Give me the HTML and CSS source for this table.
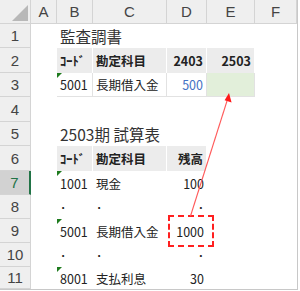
FILE: index.html
```html
<!DOCTYPE html>
<html lang="ja">
<head>
<meta charset="utf-8">
<link rel="stylesheet" href="styles.css">
</head>
<body>
<div class="sheet">
  <div class="corner"><span class="corner-tri"></span></div>
  <div class="ch">A</div><div class="ch">B</div><div class="ch">C</div><div class="ch">D</div><div class="ch">E</div><div class="ch">F</div>

  <div class="rh">1</div><div class="c"></div><div class="c title">監査調書</div><div class="c"></div><div class="c"></div><div class="c"></div><div class="c"></div>

  <div class="rh">2</div><div class="c"></div><div class="c th">ｺｰﾄﾞ</div><div class="c th">勘定科目</div><div class="c th num">2403</div><div class="c th num">2503</div><div class="c"></div>

  <div class="rh">3</div><div class="c"></div><div class="c td tri">5001</div><div class="c td">長期借入金</div><div class="c td num blue">500</div><div class="c td green"></div><div class="c"></div>

  <div class="rh">4</div><div class="c"></div><div class="c"></div><div class="c"></div><div class="c"></div><div class="c"></div><div class="c"></div>

  <div class="rh">5</div><div class="c"></div><div class="c title">2503期 試算表</div><div class="c"></div><div class="c"></div><div class="c"></div><div class="c"></div>

  <div class="rh">6</div><div class="c"></div><div class="c th">ｺｰﾄﾞ</div><div class="c th">勘定科目</div><div class="c th num">残高</div><div class="c"></div><div class="c"></div>

  <div class="rh sel">7</div><div class="c"></div><div class="c tri">1001</div><div class="c">現金</div><div class="c num">100</div><div class="c"></div><div class="c"></div>

  <div class="rh">8</div><div class="c"></div><div class="c">･</div><div class="c">･</div><div class="c num">･</div><div class="c"></div><div class="c"></div>

  <div class="rh">9</div><div class="c"></div><div class="c tri">5001</div><div class="c">長期借入金</div><div class="c num">1000</div><div class="c"></div><div class="c"></div>

  <div class="rh">10</div><div class="c"></div><div class="c">･</div><div class="c">･</div><div class="c num">･</div><div class="c"></div><div class="c"></div>

  <div class="rh">11</div><div class="c"></div><div class="c tri">8001</div><div class="c">支払利息</div><div class="c num">30</div><div class="c"></div><div class="c"></div>

  <div class="dashbox"></div>
  <svg class="arrow" width="297" height="289" viewBox="0 0 297 289">
    <line x1="190.5" y1="216" x2="227" y2="101" stroke="#ff5a5a" stroke-width="1.1"/>
    <polygon points="229,93 231.6,102.5 224.6,100.3" fill="#ff1a1a"/>
  </svg>
</div>
</body>
</html>
```
FILE: styles.css
```css
* { box-sizing: border-box; }
html, body { margin: 0; padding: 0; background: #fff; }
.sheet {
  position: relative;
  display: grid;
  grid-template-columns: 31px 26px 36px 74px 40px 48px 42px;
  grid-template-rows: 24px 24px 25px 24px 25px 24px 25px 24px 24px 24px 24px 22px;
  width: 298px;
  height: 290px;
  border-right: 1px solid #c8c8c8;
  border-bottom: 1px solid #c8c8c8;
  font-family: "Noto Sans CJK JP", "Noto Sans", sans-serif;
  font-size: 12.5px;
  color: #222;
}
.corner {
  position: relative;
  background: #efefef;
  border-right: 1px solid #d4d4d4;
  border-bottom: 1px solid #d4d4d4;
}
.corner-tri {
  position: absolute;
  right: 2px;
  bottom: 2px;
  width: 0;
  height: 0;
  border-left: 16px solid transparent;
  border-bottom: 16px solid #b8b8b8;
}
.ch {
  background: #efefef;
  border-right: 1px solid #d4d4d4;
  border-bottom: 1px solid #d4d4d4;
  display: flex;
  align-items: center;
  justify-content: center;
  font-family: "Liberation Sans", "DejaVu Sans", sans-serif;
  font-size: 15px;
  color: #444;
}
.rh {
  background: #efefef;
  border-right: 1px solid #d4d4d4;
  border-bottom: 1px solid #d4d4d4;
  display: flex;
  align-items: center;
  justify-content: center;
  font-family: "Liberation Sans", "DejaVu Sans", sans-serif;
  font-size: 15px;
  color: #444;
}
.rh.sel {
  background: #d2d2d2;
  color: #217346;
  border-right: 2px solid #217346;
}
.c {
  position: relative;
  display: flex;
  align-items: center;
  padding: 0 3px;
  white-space: nowrap;
  overflow: visible;
}
.title {
  font-size: 15.5px;
  color: #333;
  z-index: 1;
}
.th {
  background: #ececec;
  font-weight: bold;
  border-right: 1px solid #fff;
}
.td {
  border-right: 1px solid #e2e2e2;
  border-bottom: 1px solid #e2e2e2;
}
.num { justify-content: flex-end; }
.blue { color: #4472c4; }
.green { background: #e2efda; }
.tri::before {
  content: "";
  position: absolute;
  left: 0;
  top: 0;
  width: 0;
  height: 0;
  border-top: 5px solid #1e7b1e;
  border-right: 5px solid transparent;
}
.dashbox {
  position: absolute;
  left: 168px;
  top: 215px;
  width: 46px;
  height: 32px;
  border: 2px dashed #ff2020;
}
.arrow {
  position: absolute;
  left: 0;
  top: 0;
  pointer-events: none;
}
```
